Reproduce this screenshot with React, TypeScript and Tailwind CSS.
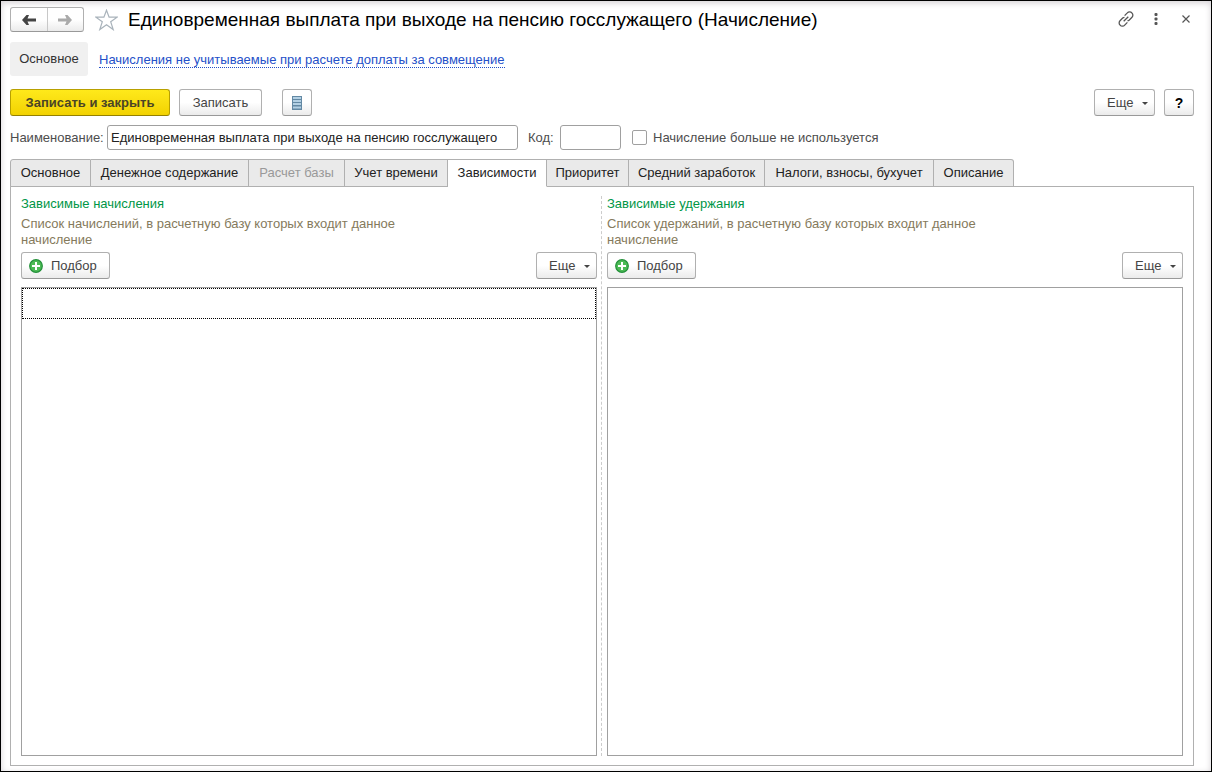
import { useState, type ReactNode } from 'react';

const tabs = [
  { title: 'Основное', width: 'min-w-[81px]' },
  { title: 'Денежное содержание', width: 'min-w-[158px]' },
  { title: 'Расчет базы', width: 'min-w-24', disabled: true },
  { title: 'Учет времени', width: 'min-w-[103px]' },
  { title: 'Зависимости', width: 'min-w-[99px]' },
  { title: 'Приоритет', width: 'min-w-[82px]' },
  { title: 'Средний заработок', width: 'min-w-[136px]' },
  { title: 'Налоги, взносы, бухучет', width: 'min-w-[169px]' },
  { title: 'Описание', width: 'min-w-20' },
];

const buttonClass =
  'flex items-center h-[27px] rounded-[3px] border border-[#b0b0b0] border-b-[#999] bg-linear-to-b from-white from-50% to-[#ebebeb] text-[#444]';

function MoreButton() {
  return (
    <button type="button" className={`${buttonClass} w-[61px] justify-between pl-3 pr-1.5`}>
      Еще
      <svg width="6" height="3" viewBox="0 0 6 3" className="mt-0.5" aria-hidden="true">
        <path d="M0 0h6L3 3z" fill="#444" />
      </svg>
    </button>
  );
}

function Arrow({ className, flip }: { className: string; flip?: boolean }) {
  return (
    <svg width="14" height="10" viewBox="0 0 14 10" className={className} aria-hidden="true">
      <path
        d="M4.500 0H7L5.500 3.500H14v3H5.500L7 10H4.500L0 5z"
        fill="currentColor"
        transform={flip ? 'matrix(-1 0 0 1 14 0)' : undefined}
      />
    </svg>
  );
}

function PlusIcon() {
  return (
    <svg width="14" height="14" viewBox="0 0 14 14" aria-hidden="true">
      <circle cx="7" cy="7" r="6.300" fill="#4cba55" stroke="#23903a" strokeWidth="1.200" />
      <path d="M7 3v8M3 7h8" stroke="#fff" strokeWidth="2" />
    </svg>
  );
}

function DependencyList({ title, hint, children }: { title: string; hint: string; children?: ReactNode }) {
  return (
    <section className="flex flex-col min-w-0">
      <h2 className="leading-4 text-[#009646]">{title}</h2>
      <p className="mt-1 max-w-[400px] leading-4 text-[#857a5c]">{hint}</p>
      <div className="mt-1 flex justify-between">
        <button type="button" className={`${buttonClass} w-[89px] gap-2 pl-[7px]`}>
          <PlusIcon />
          Подбор
        </button>
        <MoreButton />
      </div>
      <div className="mt-2 flex-1 border border-[#a0a0a0]">{children}</div>
    </section>
  );
}

export default function App() {
  const [active, setActive] = useState(4);

  return (
    <div className="flex flex-col min-h-screen border border-black bg-white pt-1.5 pb-[5px] pl-[9px] pr-[17px] text-[13px] text-[#4d4d4d] font-['Liberation_Sans',Arial,sans-serif] shadow-[inset_0_2px_6px_#d4d0d4]">
      {/* Title bar */}
      <header className="flex items-center h-[25px]">
        <div className="flex w-[74px] h-[25px] rounded-[3px] border border-[#b0b0b0] border-b-[#999] bg-linear-to-b from-white from-50% to-[#ebebeb]">
          <button type="button" aria-label="Назад" className="flex flex-1 items-center justify-center border-r border-[#c8c8c8]">
            <Arrow className="text-[#444]" />
          </button>
          <button type="button" aria-label="Вперед" className="flex flex-1 items-center justify-center">
            <Arrow className="text-[#aaa]" flip />
          </button>
        </div>
        <button type="button" aria-label="В избранное" className="ml-[11px]">
          <svg width="23" height="22" viewBox="0 0 23 22" fill="none" stroke="#a9b3bb" strokeWidth="1.200" aria-hidden="true">
            <path d="M11.500 1.200l2.600 7h8l-6.400 4.600 2.500 7.800-6.700-4.800-6.700 4.800 2.500-7.800L.9 8.200h8z" />
          </svg>
        </button>
        <h1 className="ml-2.5 text-[19px] leading-6 text-black whitespace-nowrap">
          Единовременная выплата при выходе на пенсию госслужащего (Начисление)
        </h1>
        <div className="ml-auto mb-0.5 flex items-center text-[#555]">
          <button type="button" aria-label="Получить ссылку">
            <svg width="16" height="16" viewBox="0 0 16 16" fill="none" stroke="currentColor" strokeWidth="1.300" aria-hidden="true">
              <path d="M6.600 4.600l2.700-2.700a3 3 0 0 1 4.600 0 3 3 0 0 1 .1 4.300L11.300 9a2.500 2.500 0 0 1-1.800.7" />
              <path d="M9.400 11.400l-2.700 2.700a3 3 0 0 1-4.600 0 3 3 0 0 1-.1-4.300L4.700 7a2.500 2.500 0 0 1 1.800-.7" />
              <path d="M5.700 10.300l4.600-4.600" />
            </svg>
          </button>
          <button type="button" aria-label="Меню" className="ml-5">
            <svg width="4" height="12" viewBox="0 0 4 12" fill="currentColor" aria-hidden="true">
              <rect x=".5" y="0" width="3" height="3" rx="1" />
              <rect x=".5" y="4.500" width="3" height="3" rx="1" />
              <rect x=".5" y="9" width="3" height="3" rx="1" />
            </svg>
          </button>
          <button type="button" aria-label="Закрыть" className="ml-6 mr-1">
            <svg width="8" height="8" viewBox="0 0 8 8" stroke="currentColor" strokeWidth="1.200" aria-hidden="true">
              <path d="M.5.5l7 7M7.500.5l-7 7" />
            </svg>
          </button>
        </div>
      </header>

      {/* Form navigation */}
      <nav className="mt-2.5 flex items-center">
        <a href="#main" className="flex items-center justify-center w-[78px] h-[34px] rounded-[3px] bg-[#f0f0f0] text-[#333]">
          Основное
        </a>
        <a href="#excluded" className="ml-[11px] mt-0.5 leading-[14px] border-b border-dotted border-[#2450c8] text-[#2450c8]">
          Начисления не учитываемые при расчете доплаты за совмещение
        </a>
      </nav>

      {/* Command bar */}
      <div className="mt-[13px] flex items-center">
        <button
          type="button"
          className="w-40 h-[27px] rounded-[3px] border border-[#b8a000] border-b-[#948000] bg-linear-to-b from-[#ffe91a] to-[#f2d200] font-bold text-[#4a4526]"
        >
          Записать и закрыть
        </button>
        <button type="button" className={`${buttonClass} ml-[9px] w-[83px] justify-center`}>
          Записать
        </button>
        <button type="button" aria-label="Список" className={`${buttonClass} ml-5 w-[30px] justify-center`}>
          <svg width="10" height="14" viewBox="0 0 10 14" aria-hidden="true">
            <path d="M0 0h10v14H0z" fill="#6389a4" />
            <path d="M1 2h8M1 5h8M1 8h8M1 11.500h8" stroke="#b3d0e4" strokeWidth="2" />
          </svg>
        </button>
        <div className="ml-auto flex gap-[9px]">
          <MoreButton />
          <button type="button" aria-label="Справка" className={`${buttonClass} w-[30px] justify-center text-sm font-bold text-black`}>
            ?
          </button>
        </div>
      </div>

      <div className="mt-[9px] flex items-center">
        <label htmlFor="name" className="w-[97px] whitespace-nowrap">Наименование:</label>
        <input
          id="name"
          defaultValue="Единовременная выплата при выходе на пенсию госслужащего"
          className="w-[411px] h-[25px] rounded-[3px] border border-[#a0a0a0] bg-white px-[3px] text-[#222] outline-none"
        />
        <label htmlFor="code" className="ml-2.5 w-8">Код:</label>
        <input id="code" className="w-[61px] h-[25px] rounded-[3px] border border-[#a0a0a0] bg-white px-[3px] text-[#222] outline-none" />
        <input
          id="unused"
          type="checkbox"
          className="ml-[11px] size-[15px] appearance-none rounded-[2px] border border-[#a0a0a0] bg-white checked:bg-[#777]"
        />
        <label htmlFor="unused" className="ml-1.5">Начисление больше не используется</label>
      </div>

      {/* Tabs */}
      <div role="tablist" className="relative mt-[9px] -mb-px flex">
        {tabs.map((tab, i) => (
          <button
            key={tab.title}
            type="button"
            role="tab"
            aria-selected={i === active}
            disabled={tab.disabled}
            onClick={() => setActive(i)}
            className={`${tab.width} h-7 border-t border-r border-b border-[#b0b0b0] text-center text-[#222] whitespace-nowrap first:border-l first:rounded-tl-[3px] last:rounded-tr-[3px] ${
              i === active ? 'border-b-white bg-white' : 'bg-[#eaeaea] disabled:text-[#999]'
            }`}
          >
            {tab.title}
          </button>
        ))}
      </div>

      <div role="tabpanel" className="flex-1 grid grid-cols-[1fr_10px_1fr] border border-[#b0b0b0] px-2.5 py-[9px]">
        <DependencyList
          title="Зависимые начисления"
          hint="Список начислений, в расчетную базу которых входит данное начисление"
        >
          <div tabIndex={0} className="h-[31px] border border-dotted border-black outline-none" />
        </DependencyList>
        <div className="ml-1 border-l border-dashed border-[#ccc]" />
        <DependencyList
          title="Зависимые удержания"
          hint="Список удержаний, в расчетную базу которых входит данное начисление"
        />
      </div>
    </div>
  );
}
